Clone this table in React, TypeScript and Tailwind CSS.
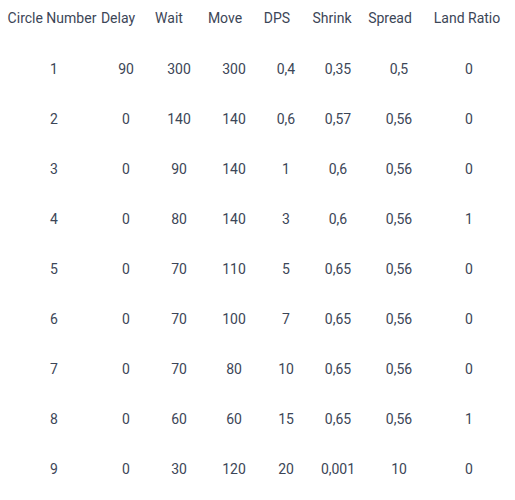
import React from 'react';

// column cell widths chosen so header text is centred where the reference has it
const columns = [
  { title: 'Circle Number', width: 'w-[104px]', shift: 'translate-x-[2px]' },
  { title: 'Delay', width: 'w-[28px]', shift: 'translate-x-[8px]' },
  { title: 'Wait', width: 'w-[74px]', shift: 'translate-x-[10px]' },
  { title: 'Move', width: 'w-[38px]', shift: 'translate-x-[9px]' },
  { title: 'DPS', width: 'w-[66px]', shift: 'translate-x-[9px]' },
  { title: 'Shrink', width: 'w-[44px]', shift: 'translate-x-[6px]' },
  { title: 'Spread', width: 'w-[72px]', shift: 'translate-x-[9px]' },
  { title: 'Land Ratio', width: 'w-[82px]', shift: 'translate-x-[2px]' },
];

const rows: string[][] = [
  ['1', '90', '300', '300', '0,4', '0,35', '0,5', '0'],
  ['2', '0', '140', '140', '0,6', '0,57', '0,56', '0'],
  ['3', '0', '90', '140', '1', '0,6', '0,56', '0'],
  ['4', '0', '80', '140', '3', '0,6', '0,56', '1'],
  ['5', '0', '70', '110', '5', '0,65', '0,56', '0'],
  ['6', '0', '70', '100', '7', '0,65', '0,56', '0'],
  ['7', '0', '70', '80', '10', '0,65', '0,56', '0'],
  ['8', '0', '60', '60', '15', '0,65', '0,56', '1'],
  ['9', '0', '30', '120', '20', '0,001', '10', '0'],
];

export default function App() {
  return (
    <div
      className="w-[515px] h-[500px] bg-white text-[#3c4657] text-[14px] leading-[20px]"
      style={{ fontFamily: 'Roboto, "Liberation Sans", sans-serif' }}
    >
      {/* Header */}
      <div className="flex h-[44px] pt-[8px]">
        {columns.map((col) => (
          <div key={col.title} className={`${col.width} flex justify-center whitespace-nowrap`}>
            <span>{col.title}</span>
          </div>
        ))}
      </div>

      {/* Body */}
      {rows.map((row, i) => (
        <div key={i} className="flex h-[50px] items-center">
          {row.map((cell, j) => (
            <div key={j} className={`${columns[j].width} flex justify-center whitespace-nowrap`}>
              <span className={columns[j].shift}>{cell}</span>
            </div>
          ))}
        </div>
      ))}
    </div>
  );
}
